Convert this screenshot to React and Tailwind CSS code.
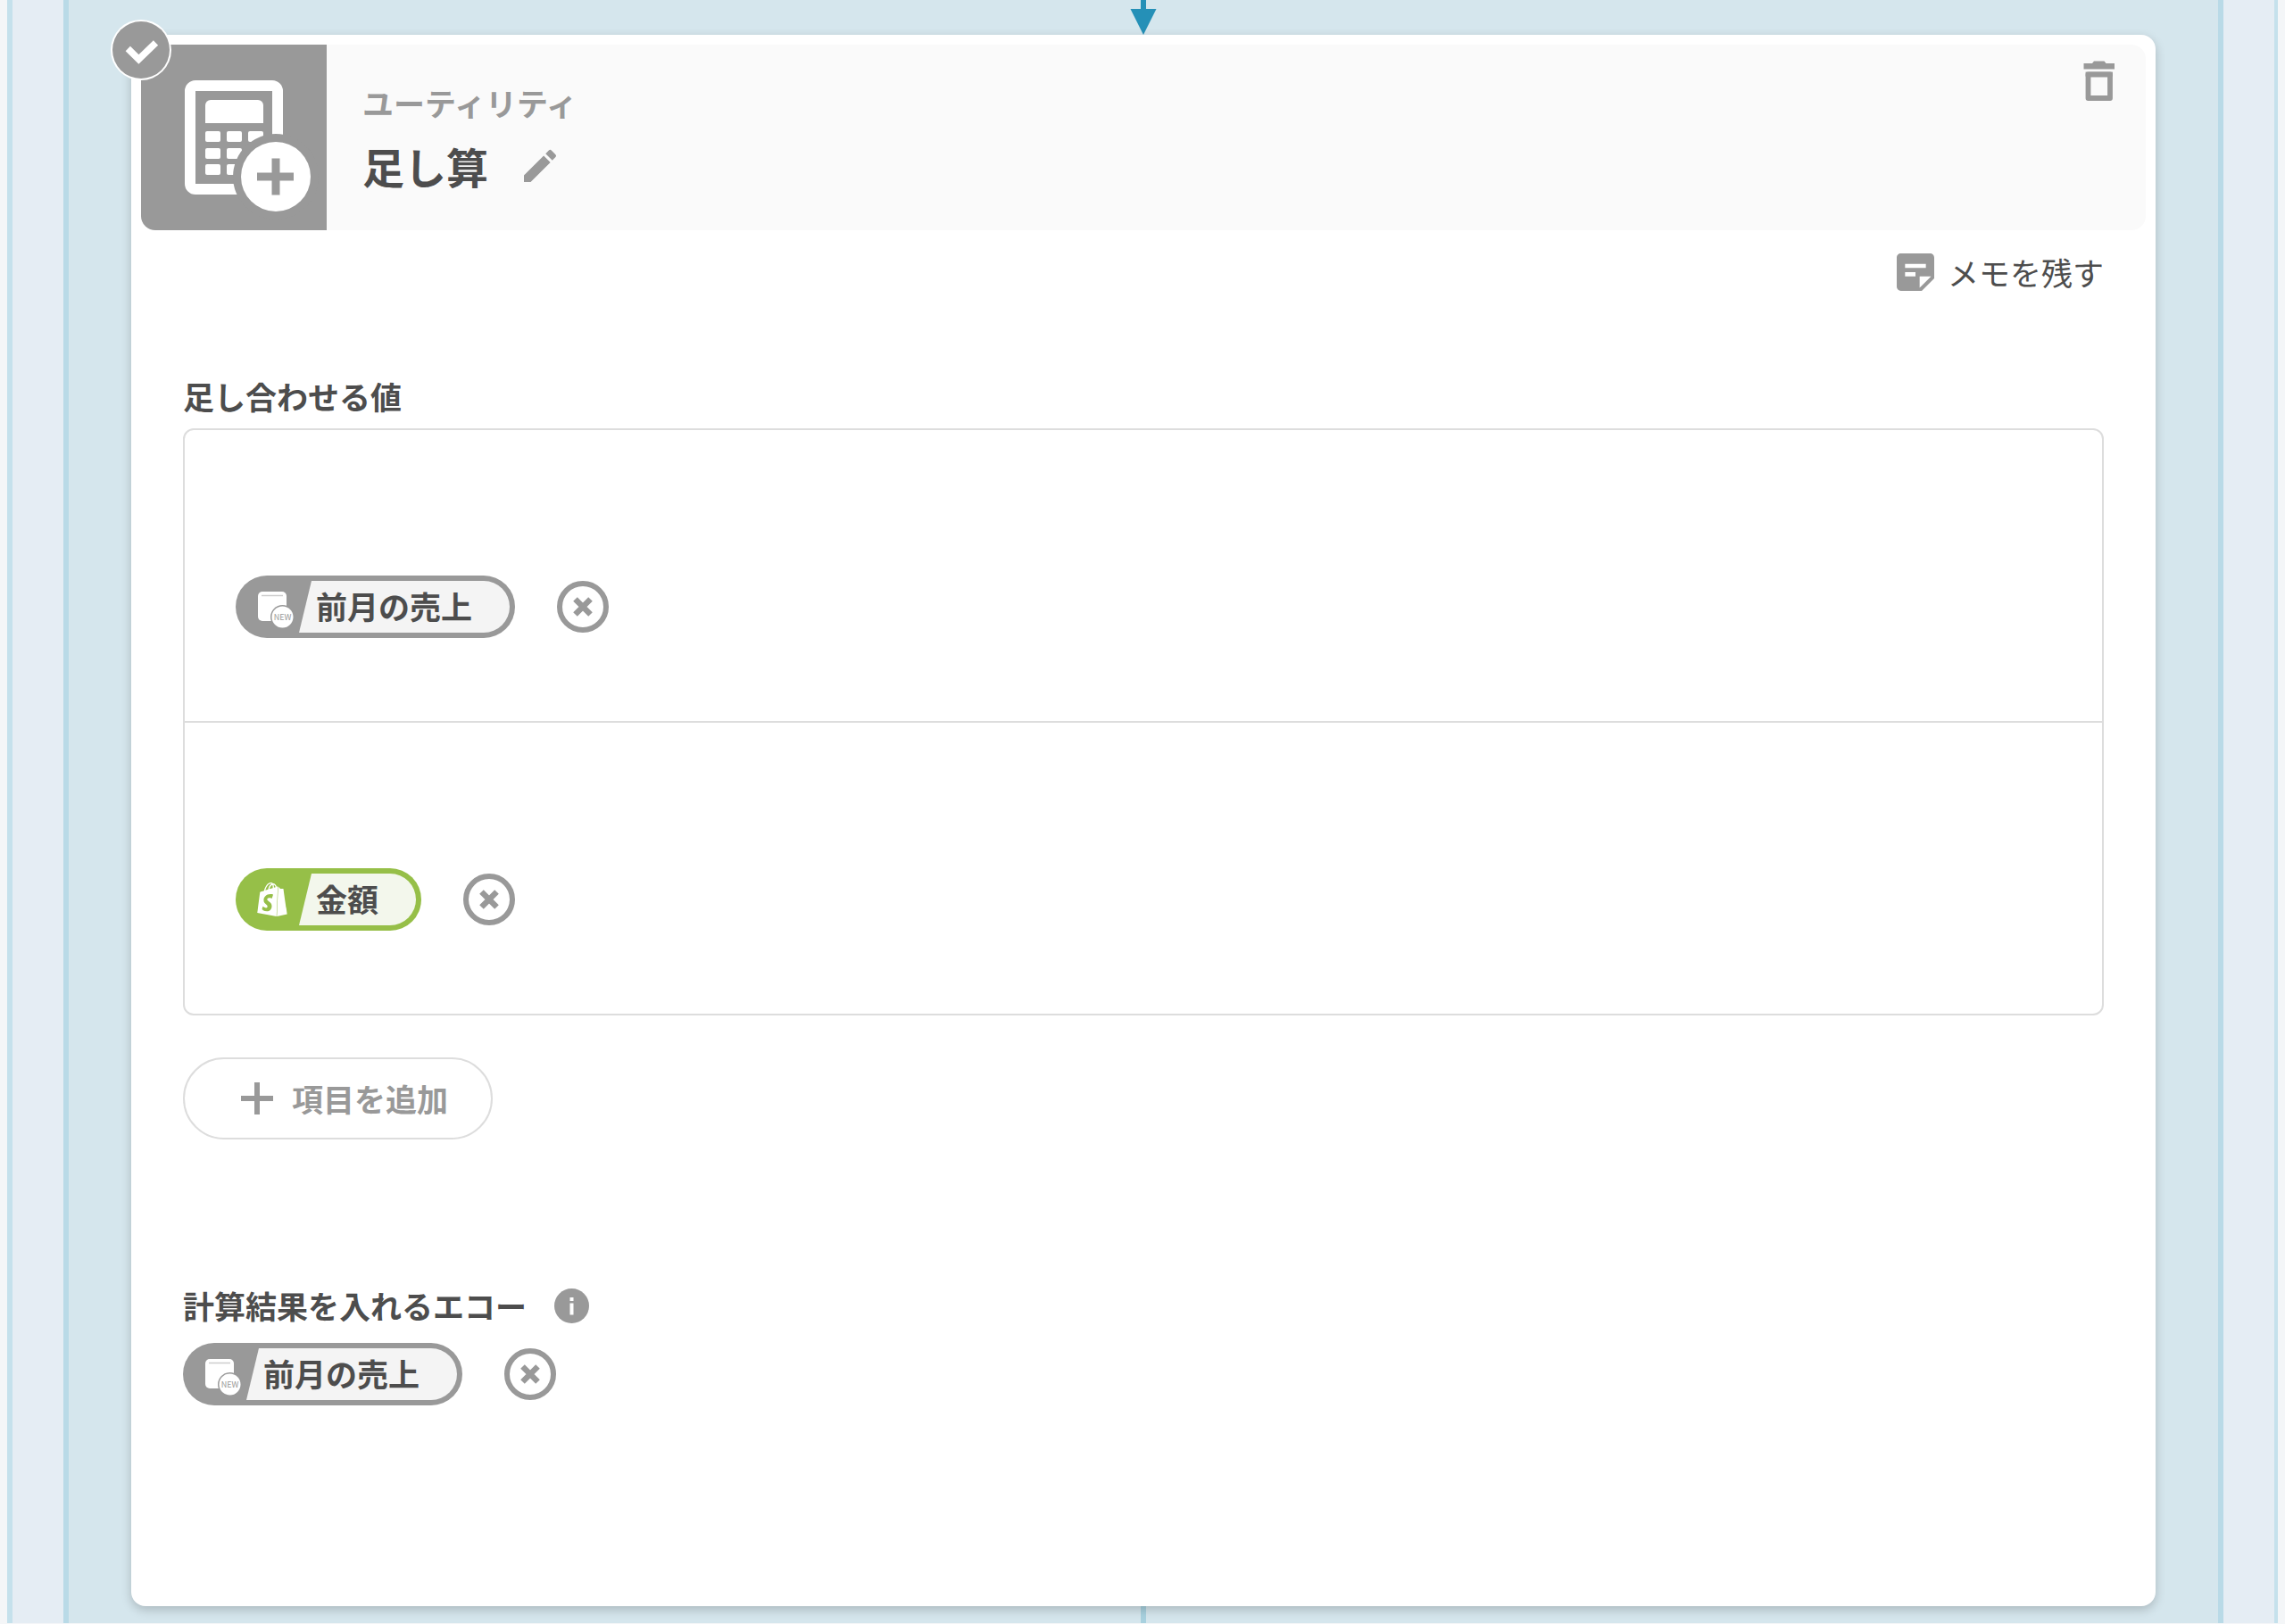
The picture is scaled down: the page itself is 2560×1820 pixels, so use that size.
import { MdEdit, MdStickyNote2 } from 'react-icons/md'
import { SiShopify } from 'react-icons/si'

const VALUES = [
  { id: 'prev-sales', label: '前月の売上', kind: 'echo' },
  { id: 'amount', label: '金額', kind: 'shopify' },
]

function CalculatorIcon() {
  return (
    <svg viewBox="0 0 208 208" className="w-[208px] h-[208px] shrink-0 rounded-bl-2xl bg-[#999999]" aria-hidden="true">
      <rect x="55" y="46" width="98" height="116" rx="6" fill="none" stroke="#fff" strokeWidth="12" />
      <rect x="61" y="52" width="86" height="104" fill="#999" />
      <path d="M72 88V68a6 6 0 0 1 6-6h53a6 6 0 0 1 6 6v20z" fill="#fff" />
      {[97, 116, 134].map((y) =>
        [72, 96, 120].map((x) => <rect key={`${x}-${y}`} x={x} y={y} width="17" height="12" rx="2" fill="#fff" />)
      )}
      <circle cx="151" cy="148" r="48" fill="#999" />
      <circle cx="151" cy="148" r="39" fill="#fff" />
      <path d="M130 148h41M151 127.500v41" stroke="#999" strokeWidth="9" />
    </svg>
  )
}

function CheckBadge() {
  return (
    <svg viewBox="0 0 68 68" className="absolute -left-[23px] -top-[17px] w-[68px] h-[68px]" aria-hidden="true">
      <circle cx="34" cy="34" r="34" fill="#fff" />
      <circle cx="34" cy="34" r="32" fill="#999" />
      <path d="M19.300 32.500L31.400 44.500L50.500 26" fill="none" stroke="#fff" strokeWidth="7.500" />
    </svg>
  )
}

function EchoIcon() {
  return (
    <svg viewBox="0 0 65 58" className="w-[65px] h-[58px] shrink-0" aria-hidden="true">
      <rect x="19" y="12" width="32" height="33" rx="5" fill="#fff" />
      <path d="M23 16.500h24" stroke="#ccc" strokeWidth="1.500" />
      <circle cx="46.500" cy="40.500" r="13.500" fill="#999" />
      <circle cx="46.500" cy="40.500" r="12" fill="#fff" />
      <text x="46.500" y="44" textAnchor="middle" fontSize="9" fill="#999">
        NEW
      </text>
    </svg>
  )
}

function Chip({ label, kind }) {
  const shopify = kind === 'shopify'
  return (
    <span className={`flex items-center p-[6px] rounded-full ${shopify ? 'bg-[#96bf48]' : 'bg-[#999999]'}`}>
      {shopify ? (
        <span className="w-[65px] pl-1 flex justify-center shrink-0">
          <SiShopify className="w-[38px] h-[38px] text-white" aria-hidden="true" />
        </span>
      ) : (
        <EchoIcon />
      )}
      <span
        className={`h-[58px] leading-[56px] pl-[19px] pr-[42px] rounded-r-full text-[35px] font-bold [clip-path:polygon(14px_0,100%_0,100%_100%,0_100%)] ${
          shopify ? 'bg-[#f3f7ec]' : 'bg-[#f4f4f4]'
        }`}
      >
        {label}
      </span>
    </span>
  )
}

function ValueChip({ label, kind }) {
  return (
    <div className="flex items-center gap-[47px]">
      <Chip label={label} kind={kind} />
      <button type="button" aria-label={`${label}を外す`} className="cursor-pointer">
        <svg viewBox="0 0 58 58" className="w-[58px] h-[58px]">
          <circle cx="29" cy="29" r="26" fill="none" stroke="#999" strokeWidth="6" />
          <path d="M20.500 20.500l17 17M37.500 20.500l-17 17" stroke="#999" strokeWidth="6.500" />
        </svg>
      </button>
    </div>
  )
}

function CardHeader() {
  return (
    <header className="flex items-start bg-[#fafafa] rounded-2xl">
      <CalculatorIcon />
      <div className="pl-10 pt-[45px]">
        <p className="text-[35px] leading-10 font-bold text-[#999999]">ユーティリティ</p>
        <div className="flex items-center gap-[34px] mt-[21px]">
          <h1 className="text-[47px] leading-[60px] font-bold">足し算</h1>
          <button type="button" aria-label="名前を編集" className="cursor-pointer">
            <MdEdit className="w-12 h-12 text-[#999999]" />
          </button>
        </div>
      </div>
      <button type="button" aria-label="削除" className="ml-auto mr-[22px] mt-[11px] cursor-pointer">
        <svg viewBox="0 0 60 60" className="w-[60px] h-[60px]">
          <path d="M12.500 10H22l2-2.500h11.500l2 2.500H47v6.500H12.500z" fill="#999" />
          <path d="M17.500 22.500h24.500v26.500H17.500z" fill="none" stroke="#999" strokeWidth="5.800" strokeLinejoin="round" />
          <path d="M14.600 19.600h30.300v5H14.600z" fill="#999" />
        </svg>
      </button>
    </header>
  )
}

function ActionCard() {
  return (
    <article className="relative bg-white rounded-2xl p-[11px] shadow-[0_4px_12px_rgba(0,0,0,0.2)]">
      <CardHeader />
      <CheckBadge />

      <div className="px-[47px] pt-[19px] pb-[214px]">
        <button type="button" className="flex items-center gap-2 ml-auto text-[35px] leading-[52px] cursor-pointer">
          <MdStickyNote2 className="w-14 h-14 text-[#999999]" aria-hidden="true" />
          メモを残す
        </button>

        <section>
          <h2 className="mt-[87px] mb-3 text-[35px] leading-[48px] font-bold">足し合わせる値</h2>
          <ul className="border-2 border-[#dddddd] rounded-xl divide-y-2 divide-[#dddddd]">
            {VALUES.map((value) => (
              <li key={value.id} className="pl-[57px] pt-[163px] pb-[93px]">
                <ValueChip label={value.label} kind={value.kind} />
              </li>
            ))}
          </ul>
          <button
            type="button"
            className="mt-[47px] h-[92px] pl-[63px] pr-[48px] flex items-center gap-[21px] border-2 border-[#dddddd] rounded-full text-[35px] font-bold text-[#999999] cursor-pointer"
          >
            <svg viewBox="0 0 36 36" className="w-9 h-9" aria-hidden="true">
              <path d="M0 18h36M18 0v36" stroke="#999" strokeWidth="6" />
            </svg>
            項目を追加
          </button>
        </section>

        <section>
          <div className="flex items-center gap-[31px] mt-[162px] mb-[18px]">
            <h2 className="text-[35px] leading-[48px] font-bold">計算結果を入れるエコー</h2>
            <svg viewBox="0 0 39 39" className="w-[39px] h-[39px]" role="img" aria-label="説明">
              <circle cx="19.500" cy="19.500" r="19.500" fill="#999" />
              <path d="M17.500 10h4v4h-4zM17.500 16.500h4v13h-4z" fill="#fff" />
            </svg>
          </div>
          <ValueChip label="前月の売上" kind="echo" />
        </section>
      </div>
    </article>
  )
}

export default function App() {
  return (
    <div className="min-h-screen flex flex-col px-2 pb-px bg-[#f4f6f8] text-[#4d4d4d] font-['Noto_Sans_CJK_JP',sans-serif]">
      <div className="flex-1 flex flex-col px-[57px] bg-[#e5edf4] border-l-[6px] border-r-4 border-[#c5e1ec]">
        <main className="flex-1 flex flex-col px-[70px] bg-[#d5e6ed] border-x-[6px] border-[#b9dae7]">
          <svg viewBox="0 0 30 39" className="w-[30px] h-[39px] mx-auto" aria-hidden="true">
            <path d="M12 0h6v10h11.500L15 39L0.500 10H12z" fill="#2590b7" />
          </svg>
          <ActionCard />
          <div className="w-[6px] min-h-[16px] flex-1 mx-auto bg-[#a8d1df]" />
        </main>
      </div>
    </div>
  )
}
